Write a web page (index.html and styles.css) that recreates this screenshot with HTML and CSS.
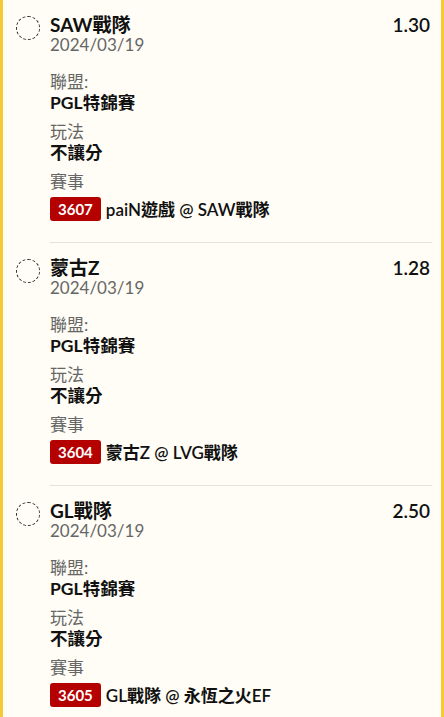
FILE: index.html
```html
<!DOCTYPE html>
<html lang="zh-Hant">
<head>
  <meta charset="UTF-8">
  <meta name="viewport" content="width=device-width, initial-scale=1.0">
  <title>投注單</title>
  <link rel="stylesheet" href="styles.css">
</head>
<body>
  <div class="bet-list">
    <!-- 注單 1 -->
    <div class="bet">
      <div class="bet-check"></div>
      <div class="bet-body">
        <div class="bet-head">
          <div class="bet-team">SAW戰隊</div>
          <div class="bet-odds">1.30</div>
        </div>
        <div class="bet-date">2024/03/19</div>
        <div class="field first">
          <div class="field-label">聯盟:</div>
          <div class="field-value">PGL特錦賽</div>
        </div>
        <div class="field">
          <div class="field-label">玩法</div>
          <div class="field-value">不讓分</div>
        </div>
        <div class="field">
          <div class="field-label">賽事</div>
          <div class="match">
            <span class="match-id">3607</span>
            <span class="match-name">paiN遊戲 @ SAW戰隊</span>
          </div>
        </div>
      </div>
    </div>

    <!-- 注單 2 -->
    <div class="bet">
      <div class="bet-check"></div>
      <div class="bet-body">
        <div class="bet-head">
          <div class="bet-team">蒙古Z</div>
          <div class="bet-odds">1.28</div>
        </div>
        <div class="bet-date">2024/03/19</div>
        <div class="field first">
          <div class="field-label">聯盟:</div>
          <div class="field-value">PGL特錦賽</div>
        </div>
        <div class="field">
          <div class="field-label">玩法</div>
          <div class="field-value">不讓分</div>
        </div>
        <div class="field">
          <div class="field-label">賽事</div>
          <div class="match">
            <span class="match-id">3604</span>
            <span class="match-name">蒙古Z @ LVG戰隊</span>
          </div>
        </div>
      </div>
    </div>

    <!-- 注單 3 -->
    <div class="bet">
      <div class="bet-check"></div>
      <div class="bet-body">
        <div class="bet-head">
          <div class="bet-team">GL戰隊</div>
          <div class="bet-odds">2.50</div>
        </div>
        <div class="bet-date">2024/03/19</div>
        <div class="field first">
          <div class="field-label">聯盟:</div>
          <div class="field-value">PGL特錦賽</div>
        </div>
        <div class="field">
          <div class="field-label">玩法</div>
          <div class="field-value">不讓分</div>
        </div>
        <div class="field">
          <div class="field-label">賽事</div>
          <div class="match">
            <span class="match-id">3605</span>
            <span class="match-name">GL戰隊 @ 永恆之火EF</span>
          </div>
        </div>
      </div>
    </div>
  </div>
</body>
</html>
```

FILE: styles.css
```css
:root {
  --accent: #f7c933;
  --bg: #fffdf5;
  --text: #111;
  --muted: #666;
  --badge: #b50000;
  --line: #e6e3da;
}

* {
  margin: 0;
  padding: 0;
  box-sizing: border-box;
}

body {
  background-color: var(--bg);
  color: var(--text);
  font-family: Lato, "Noto Sans CJK TC", sans-serif;
}

.bet-list {
  min-height: 100vh;
  border-left: 3px solid var(--accent);
  border-right: 3px solid var(--accent);
  padding: 0 9px 0 13px;
}

.bet {
  display: flex;
  gap: 10px;
  padding-top: 14px;
}

.bet-check {
  flex: none;
  width: 24px;
  height: 24px;
  margin-top: 2px;
  border: 1px dashed #333;
  border-radius: 50%;
}

.bet-body {
  flex: 1;
  padding-bottom: 21px;
  border-bottom: 1px solid var(--line);
}

.bet-head {
  display: flex;
  justify-content: space-between;
  align-items: baseline;
}

.bet-team {
  font-size: 19px;
  font-weight: 700;
  line-height: 22px;
}

.bet-odds {
  font-size: 19px;
  font-weight: 600;
  line-height: 22px;
  padding-right: 2px;
}

.bet-date {
  font-size: 17px;
  line-height: 18px;
  color: var(--muted);
}

.field {
  margin-top: 8px;
}

.field.first {
  margin-top: 18px;
}

.field-label {
  font-size: 17px;
  line-height: 20px;
  color: var(--muted);
}

.field-value {
  font-size: 17.5px;
  font-weight: 700;
  line-height: 22px;
}

.match {
  display: flex;
  align-items: center;
  gap: 5px;
  margin-top: 4px;
}

.match-id {
  display: inline-block;
  height: 24px;
  padding: 0 8px;
  border-radius: 3px;
  background-color: var(--badge);
  color: #fff;
  font-size: 15px;
  font-weight: 700;
  line-height: 24px;
}

.match-name {
  font-size: 17px;
  font-weight: 600;
}
```
